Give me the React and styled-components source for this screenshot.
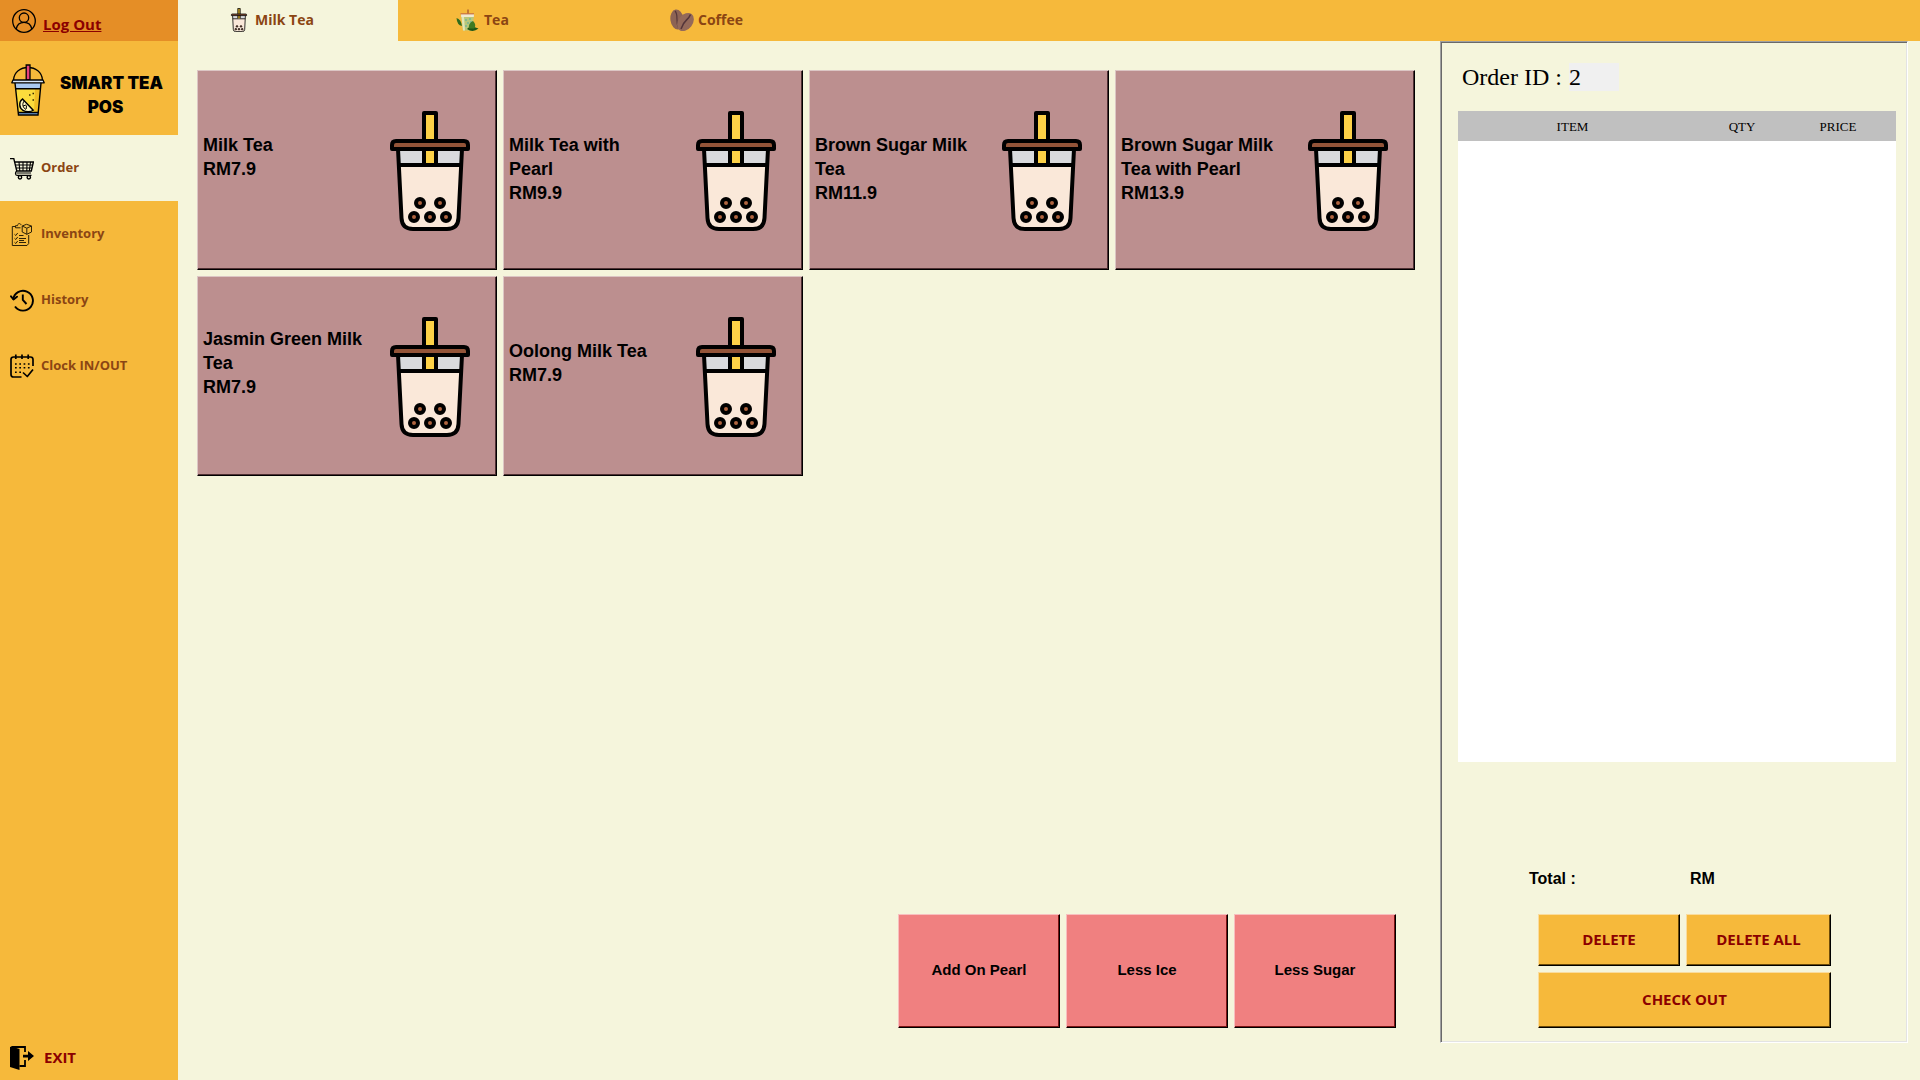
import React, { useState } from "react";
import styled, { createGlobalStyle } from "styled-components";

const color = {
  beige: "#f5f5dc",
  orange: "#f6b93b",
  deepOrange: "#e58e26",
  brown: "#8b4513",
  darkRed: "#8b0000",
  rosy: "#bc8f8f",
  coral: "#f08080",
  silver: "#c0c0c0",
};

const uiFont = `"Open Sans", "Noto Sans", sans-serif`;
const plainFont = `"Liberation Sans", Arial, sans-serif`;
const serifFont = `"Liberation Serif", "Times New Roman", serif`;

const GlobalStyle = createGlobalStyle`
  *, *::before, *::after { box-sizing: border-box; }
  body { margin: 0; background: ${color.beige}; }
  button { cursor: pointer; }
`;

const Page = styled.div`
  display: flex;
  min-height: 100vh;
  background: ${color.beige};
  font-family: ${uiFont};
`;

/* ---------- sidebar ---------- */

const Sidebar = styled.aside`
  display: flex;
  flex-direction: column;
  flex: none;
  width: 178px;
  background: ${color.orange};
`;

const Account = styled.div`
  display: flex;
  align-items: center;
  gap: 7px;
  height: 41px;
  padding-left: 12px;
  background: ${color.deepOrange};
`;

const LogOut = styled.a`
  align-self: flex-end;
  color: ${color.darkRed};
  font-size: 15px;
  font-weight: 700;
  line-height: 34px;
`;

const Brand = styled.div`
  display: flex;
  align-items: center;
  height: 94px;
  padding: 4px 0 0 11px;
`;

const BrandName = styled.h1`
  flex: 1;
  margin: 0;
  padding: 10px 12px 0 0;
  font-family: Inter, ${uiFont};
  font-size: 17px;
  font-weight: 900;
  line-height: 24px;
  text-align: center;
  white-space: nowrap;
  color: #000;
`;

const Nav = styled.nav`
  display: flex;
  flex-direction: column;
`;

const NavItem = styled.button`
  display: flex;
  align-items: center;
  gap: 7px;
  height: 66px;
  padding: 0 10px;
  border: 0;
  background: ${(p) => (p.$active ? color.beige : "transparent")};
  color: ${color.brown};
  font-family: ${uiFont};
  font-size: 13px;
  font-weight: 700;
  line-height: 20px;
`;

const NavText = styled.span`
  padding-bottom: 2px;
`;

const Exit = styled(NavItem)`
  gap: 10px;
  height: 44px;
  margin-top: auto;
  color: ${color.darkRed};
  font-size: 15px;
`;

/* ---------- main area ---------- */

const Main = styled.main`
  display: flex;
  flex-direction: column;
  flex: 1;
  min-width: 0;
`;

const TabBar = styled.div`
  display: flex;
  height: 41px;
  background: ${color.orange};
`;

const Tab = styled.button`
  display: flex;
  align-items: center;
  gap: 4px;
  width: 220px;
  padding: 0 0 2px ${(p) => p.$inset}px;
  border: 0;
  background: ${(p) => (p.$active ? color.beige : "transparent")};
  color: ${color.brown};
  font-family: ${uiFont};
  font-size: 14px;
  font-weight: 700;
  line-height: 20px;
`;

const Workspace = styled.div`
  display: flex;
  flex: 1;
  padding: 0 12px 37px 0;
`;

const Catalog = styled.section`
  display: flex;
  flex-direction: column;
  justify-content: space-between;
  gap: 24px;
  flex: 1;
  min-width: 0;
  padding: 29px 24px 15px 19px;
`;

const ProductGrid = styled.div`
  display: grid;
  grid-template-columns: repeat(auto-fill, 300px);
  grid-auto-rows: 200px;
  gap: 6px;
`;

const Bevel = styled.button`
  border: 1px solid;
  border-color: ${(p) => p.$light} #000 #000 ${(p) => p.$light};
  box-shadow: inset -1px -1px ${(p) => p.$dark};
  background: ${(p) => p.$face};
  color: #000;
`;

const Product = styled(Bevel)`
  display: flex;
  align-items: center;
  justify-content: space-between;
  padding: 2px 26px 0 5px;
  font-family: ${plainFont};
  font-size: 18px;
  font-weight: 700;
  line-height: 24px;
  text-align: left;
`;

const ProductText = styled.span`
  padding-bottom: ${(p) => (p.$low ? 4 : 28)}px;
  white-space: nowrap;
`;

const Line = styled.span`
  display: block;
  padding-left: ${(p) => p.$indent || 0}px;
`;

const Modifiers = styled.div`
  display: flex;
  justify-content: flex-end;
  gap: 6px;
  padding-right: 20px;
`;

const Modifier = styled(Bevel)`
  width: 162px;
  height: 114px;
  padding: 0 0 4px;
  font-family: ${plainFont};
  font-size: 15px;
  font-weight: 700;
`;

/* ---------- order panel ---------- */

const OrderPanel = styled.section`
  display: flex;
  flex-direction: column;
  flex: none;
  width: 468px;
  padding: 21px 11px 14px 17px;
  border: 1px solid;
  border-color: #a0a0a0 #fff #fff #a0a0a0;
  box-shadow: inset 1px 1px #696969, inset -1px -1px #e3e3e3;
`;

const OrderIdRow = styled.div`
  display: flex;
  align-items: center;
  gap: 7px;
  padding-left: 4px;
  font-family: ${serifFont};
  font-size: 24px;
  line-height: 28px;
`;

const OrderIdInput = styled.input`
  width: 50px;
  height: 28px;
  padding: 0;
  border: 0;
  background: #f0f0f0;
  color: #000;
  font: inherit;
`;

const OrderList = styled.div`
  flex: 1;
  margin-top: 20px;
  background: #fff;
`;

const OrderTable = styled.table`
  width: 100%;
  border-collapse: collapse;
  table-layout: fixed;
  background: ${color.silver};
`;

const HeadCell = styled.th`
  width: ${(p) => p.$width};
  height: 30px;
  padding: ${(p) => (p.$last ? "2px 17px 0 0" : "2px 0 0")};
  font-family: ${serifFont};
  font-size: 13px;
  font-weight: 400;
  line-height: 16px;
`;

const Total = styled.div`
  display: grid;
  grid-template-columns: 161px 1fr;
  padding: 107px 0 25px 71px;
  font-family: ${plainFont};
  font-size: 16px;
  font-weight: 700;
  line-height: 20px;
`;

const Actions = styled.div`
  display: grid;
  grid-template-columns: 142px 145px;
  grid-template-rows: 52px 56px;
  gap: 6px;
  padding-left: 80px;
`;

const Action = styled(Bevel)`
  grid-column: ${(p) => (p.$wide ? "1 / -1" : "auto")};
  padding: 0 0 2px;
  color: ${color.darkRed};
  font-family: ${uiFont};
  font-size: 15px;
  font-weight: 700;
`;

/* ---------- drawings ---------- */

const BobaCup = ({ width, height, straw = "#fdd147" }) => (
  <svg width={width} height={height} viewBox="0 0 80 120" aria-hidden="true">
    <path d="M8 38 L11.5 107 Q12 118 23 118 H57 Q68 118 68.500 107 L72 38 Z" fill="#fae8d9" />
    <path d="M8 38 H72 L71 54 H9 Z" fill="#d9dadd" />
    <path d="M8 38 L11.500 107 Q12 118 23 118 H57 Q68 118 68.500 107 L72 38" fill="none" stroke="#000" strokeWidth="4" />
    <path d="M9 54 H71" stroke="#000" strokeWidth="4" />
    <path d="M34 52 V2 H46 V52" fill={straw} stroke="#000" strokeWidth="4" strokeLinejoin="round" />
    <path d="M2 38 V34 Q2 30 6 30 H74 Q78 30 78 34 V38 Z" fill="#935438" stroke="#000" strokeWidth="4" strokeLinejoin="round" />
    {[[30, 92], [50, 92], [24, 106], [40, 106], [56, 106]].map(([cx, cy]) => (
      <circle key={`${cx}-${cy}`} cx={cx} cy={cy} r="4" fill="#b0643f" stroke="#000" strokeWidth="4" />
    ))}
  </svg>
);

const UserIcon = () => (
  <svg width="24" height="24" viewBox="0 0 24 24" fill="none" stroke="#000" strokeWidth="1.300" aria-hidden="true">
    <circle cx="12" cy="12" r="11.300" />
    <circle cx="12" cy="8.700" r="4.700" />
    <path d="M4.300 20 C5 15.500 8 13.400 12 13.400 S19 15.500 19.700 20" />
  </svg>
);

const LemonCup = () => (
  <svg width="34" height="52" viewBox="0 0 34 52" aria-hidden="true">
    <path d="M2.500 16 C3 8 9.500 3.500 17 3.500 S31 8 31.500 16" fill="none" stroke="#000" strokeWidth="1.300" />
    <path d="M15.200 16 V1 H19 V16 Z" fill="#e8427c" stroke="#000" strokeWidth="1.300" />
    <path d="M4 19 L7.500 51 H27 L30 19 Z" fill="#fbdc3c" />
    <path d="M24 24 H29.500 L27 49 H23 Z" fill="#f0bd24" />
    <path d="M4 19 H30 L29.500 24.500 H4.500 Z" fill="#a9c8ef" />
    <path d="M7.300 48.500 H27.200 L27 51 H7.500 Z" fill="#73a5e0" />
    <path d="M4 19 L7.500 51 H27 L30 19 M4.500 24.700 H29.500 M7.300 48.500 H27.200" fill="none" stroke="#000" strokeWidth="1.400" />
    <path d="M2 16 H32 L33.200 18.800 H0.800 Z" fill="#d7e7fb" stroke="#000" strokeWidth="1.300" strokeLinejoin="round" />
    <path d="M11.500 35 C7.500 38 8 44 12 46.300 C15.500 48.300 20 47.800 22.200 46.200 Z" fill="#fff8c6" stroke="#000" strokeWidth="1.400" />
    <path d="M13.400 36.800 C10.500 40 12 44 15 45.500 M15 41 L12 42 M15.500 41.500 L15.200 45" fill="none" stroke="#000" strokeWidth="1" />
    <path d="M18 31 h1.500 M21.500 29.500 h1.500 M21.500 36 h1.500" stroke="#3a2b00" strokeWidth="1.400" />
  </svg>
);

const CartIcon = () => (
  <svg width="24" height="24" viewBox="0 0 24 24" fill="none" stroke="#000" strokeWidth="1.400" aria-hidden="true">
    <path d="M0 2.600 H3.800 L6.800 15 H21.300 L23.400 6 H4.700" />
    <path d="M5.400 9 H22.500 M6.200 12 H22 M9 6 L9.800 15 M13 6 V15 M17 6 L16.800 15 M20.500 6 L19.300 15" strokeWidth="1.100" />
    <path d="M6.800 15 C5 16 5 19.300 7 19.300 H21.500 M6.500 17 H21" strokeWidth="1.200" />
    <circle cx="10" cy="21.300" r="1.700" />
    <circle cx="18.800" cy="21.300" r="1.700" />
  </svg>
);

const InventoryIcon = () => (
  <svg width="24" height="24" viewBox="0 0 24 24" fill="none" stroke="#2b2108" strokeWidth="1" aria-hidden="true">
    <path d="M5.500 4.500 H2.300 V23.500 H17 L18.700 21.500 V13" />
    <path d="M5.500 5.800 V3.700 H7.500 C7.500 1 11 1 11 3.200 M5.500 5.800 H10.500" />
    <path d="M16.500 2.300 L21.500 4 V10 L16.800 12.300 L12.200 10 V4 Z M12.200 4 L16.800 6.200 L21.500 4 M16.800 6.200 V12.300" />
    <path d="M4.500 12.300 L5.800 13.500 L7.700 11 M4.500 16.300 L5.800 17.500 L7.700 15 M4.500 20.300 L5.800 21.500 L7.700 19" />
    <path d="M9 13.500 H13.500 M9 16.500 H16 M9 18.500 H14 M9 20.500 H16" />
  </svg>
);

const HistoryIcon = () => (
  <svg width="24" height="24" viewBox="0 0 24 24" fill="none" stroke="#000" strokeWidth="1.900" aria-hidden="true">
    <path d="M3.200 11.500 A9.900 9.900 0 1 1 5 18.500" />
    <path d="M1 8.300 L3.500 11.500 L7 8.700" strokeLinejoin="round" strokeLinecap="round" />
    <path d="M12.800 6.500 V12 L16.500 16" />
  </svg>
);

const CalendarIcon = () => (
  <svg width="24" height="24" viewBox="0 0 24 24" fill="none" stroke="#000" strokeWidth="1.700" aria-hidden="true">
    <path d="M11.500 23 H3.500 Q1 23 1 20.500 V5.500 Q1 3 3.500 3 H20.500 Q23 3 23 5.500 V12" />
    <path d="M5.800 0.500 V5 M12 0.500 V5 M18.200 0.500 V5" />
    <path d="M5 10 H20 M5 13.800 H20 M5 18.300 H11" strokeDasharray="1.700 2.600" strokeWidth="1.600" />
    <path d="M13 18.500 L17.300 22.500 L23 15.500" strokeLinejoin="round" />
  </svg>
);

const ExitIcon = () => (
  <svg width="24" height="24" viewBox="0 0 24 24" aria-hidden="true">
    <path d="M0 1 L1.500 0.500 L9.500 3 V24 L0 21 Z" fill="#000" />
    <path d="M1.500 1 H15 V6 M15 14 V20 H9.500" fill="none" stroke="#000" strokeWidth="1.800" />
    <path d="M13 8.700 H18 V5 L24 10 L18 15 V11.500 H13 Z" fill="#000" />
  </svg>
);

const TeaIcon = () => (
  <svg width="24" height="24" viewBox="0 0 24 24" aria-hidden="true">
    <path d="M12 6 V1.500" stroke="#a65432" strokeWidth="1.300" />
    <path d="M0.500 10 Q5 11 6 18 Q1 17 0.500 10 Z" fill="#2e6b1d" />
    <path d="M5 6 H18 L16.500 22.500 H7 Z" fill="#b9c77a" />
    <path d="M5 6 H18 L17.800 9 H5.200 Z" fill="#f1ead2" />
    <path d="M5.500 9 L8 9 L9 22.500 H7 Z" fill="#e3e6b6" />
    <path d="M9 12 h2 M13 11 h2 M11 15 h2 M14 14 h2 M9 18 h2" stroke="#75b896" strokeWidth="1.500" />
    <path d="M4.500 5.800 H18" stroke="#c87343" strokeWidth="1.200" />
    <path d="M11 21 Q14 17 22.500 20.500 Q17 25 11 21 Z" fill="#1f5716" />
    <path d="M13 20.500 Q12 15 17 13 Q21 17 18 20.500 Z" fill="#3f7a22" />
  </svg>
);

const CoffeeIcon = () => (
  <svg width="24" height="24" viewBox="0 0 24 24" aria-hidden="true">
    <ellipse cx="7" cy="11.500" rx="6.600" ry="10" fill="#8d6354" transform="rotate(-8 7 11.500)" />
    <path d="M5 3 C9 7 5 13 8.500 20" fill="none" stroke="#54353a" strokeWidth="1.200" />
    <ellipse cx="15.500" cy="14" rx="7.200" ry="10" fill="#94695a" transform="rotate(38 15.500 14)" />
    <path d="M20.500 6.500 C18 13 14 11 11 21" fill="none" stroke="#54353a" strokeWidth="1.500" />
  </svg>
);

/* ---------- data ---------- */

const navItems = [
  { label: "Order", Icon: CartIcon },
  { label: "Inventory", Icon: InventoryIcon },
  { label: "History", Icon: HistoryIcon },
  { label: "Clock IN/OUT", Icon: CalendarIcon },
];

const MilkTeaIcon = () => <BobaCup width="24" height="24" straw="#c9a227" />;

const tabs = [
  { label: "Milk Tea", Icon: MilkTeaIcon, inset: 49 },
  { label: "Tea", Icon: TeaIcon, inset: 58 },
  { label: "Coffee", Icon: CoffeeIcon, inset: 52 },
];

const products = [
  { lines: ["Milk Tea"], price: "RM7.9" },
  { lines: ["Milk Tea with", "Pearl"], price: "RM9.9", low: true },
  { lines: ["Brown Sugar Milk", "Tea"], price: "RM11.9", low: true },
  { lines: ["Brown Sugar Milk", "Tea with Pearl"], price: "RM13.9", low: true },
  { lines: ["Jasmin Green Milk", "Tea"], price: "RM7.9" },
  { lines: ["Oolong Milk Tea"], price: "RM7.9" },
];

const modifiers = ["Add On Pearl", "Less Ice", "Less Sugar"];

const actions = [
  { label: "DELETE" },
  { label: "DELETE ALL" },
  { label: "CHECK OUT", wide: true },
];

export default function App() {
  const [page, setPage] = useState("Order");
  const [tab, setTab] = useState("Milk Tea");

  return (
    <Page>
      <GlobalStyle />
      <Sidebar>
        <Account>
          <UserIcon />
          <LogOut href="#logout">Log Out</LogOut>
        </Account>
        <Brand>
          <LemonCup />
          <BrandName>
            <Line $indent={12}>SMART TEA</Line>
            <Line>POS</Line>
          </BrandName>
        </Brand>
        <Nav>
          {navItems.map(({ label, Icon }) => (
            <NavItem key={label} type="button" $active={page === label} onClick={() => setPage(label)}>
              <Icon />
              <NavText>{label}</NavText>
            </NavItem>
          ))}
        </Nav>
        <Exit type="button">
          <ExitIcon />
          <NavText>EXIT</NavText>
        </Exit>
      </Sidebar>

      <Main>
        <TabBar>
          {tabs.map(({ label, Icon, inset }) => (
            <Tab key={label} type="button" $inset={inset} $active={tab === label} onClick={() => setTab(label)}>
              <Icon />
              {label}
            </Tab>
          ))}
        </TabBar>
        <Workspace>
          <Catalog>
            <ProductGrid>
              {products.map(({ lines, price, low }) => (
                <Product key={lines.join(" ")} type="button" $face={color.rosy} $light="#dcc6c4" $dark="#4f3033">
                  <ProductText $low={low}>
                    {lines.map((line) => (
                      <Line key={line}>{line}</Line>
                    ))}
                    <Line>{price}</Line>
                  </ProductText>
                  <BobaCup width="80" height="120" />
                </Product>
              ))}
            </ProductGrid>
            <Modifiers>
              {modifiers.map((label) => (
                <Modifier key={label} type="button" $face={color.coral} $light="#f8bfbf" $dark="#7a1414">
                  {label}
                </Modifier>
              ))}
            </Modifiers>
          </Catalog>

          <OrderPanel>
            <OrderIdRow>
              <label htmlFor="order-id">Order ID :</label>
              <OrderIdInput id="order-id" defaultValue="2" readOnly />
            </OrderIdRow>
            <OrderList>
              <OrderTable>
                <thead>
                  <tr>
                    <HeadCell scope="col" $width="auto">ITEM</HeadCell>
                    <HeadCell scope="col" $width="110px">QTY</HeadCell>
                    <HeadCell scope="col" $width="99px" $last>PRICE</HeadCell>
                  </tr>
                </thead>
              </OrderTable>
            </OrderList>
            <Total>
              <span>Total :</span>
              <span>RM</span>
            </Total>
            <Actions>
              {actions.map(({ label, wide }) => (
                <Action key={label} type="button" $wide={wide} $face={color.orange} $light="#fadc9d" $dark="#6b4a08">
                  {label}
                </Action>
              ))}
            </Actions>
          </OrderPanel>
        </Workspace>
      </Main>
    </Page>
  );
}
